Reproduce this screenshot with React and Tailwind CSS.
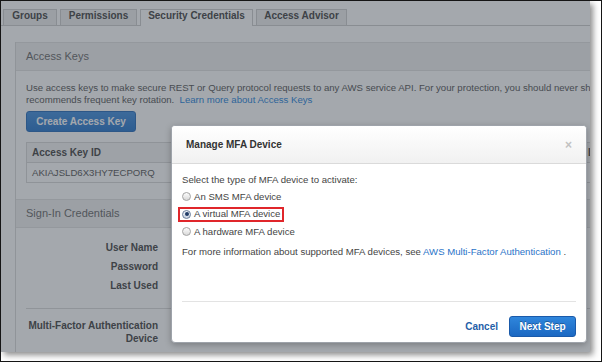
const tabs = [
  { label: 'Groups', w: 'w-[54px]' },
  { label: 'Permissions', w: 'w-[77px]' },
  { label: 'Security Credentials', w: 'w-[113px]', active: true },
  { label: 'Access Advisor', w: 'w-[91px]' },
]

function Radio({ checked }) {
  return (
    <span
      className={`w-[9px] h-[9px] rounded-full border flex items-center justify-center shrink-0 bg-gradient-to-b ${
        checked ? 'border-[#6b7f9c] from-[#eef2f8] to-[#c9d3e2]' : 'border-[#a3a3a3] from-[#fdfdfd] to-[#d8d8d8]'
      }`}
    >
      {checked && <span className="w-[4px] h-[4px] rounded-full bg-[#1f3a66]" />}
    </span>
  )
}

function Page() {
  return (
    <div className="w-[800px] bg-white">
      <div className="flex items-end gap-[3px] pl-[2px] pt-[8px] border-b border-[#d2d2d2]">
        {tabs.map(t => (
          <div
            key={t.label}
            className={`${t.w} text-center text-[10px] leading-[11px] font-bold text-[#555] border border-b-0 border-[#d2d2d2] ${
              t.active ? 'h-[17px] -mb-px bg-white' : 'h-[16px] bg-[#f1f1f1]'
            }`}
          >
            {t.label}
          </div>
        ))}
      </div>

      <div className="ml-[14px] mt-[16px] border-l border-[#dedede]">
        <div className="h-[29px] flex items-center pl-[10px] bg-[#f2f2f2] border-y border-[#e4e4e4] text-[11px] text-[#777]">
          Access Keys
        </div>
        <div className="pl-[10px] pt-[11px] text-[9.6px] leading-[12px] text-[#666]">
          <p className="whitespace-nowrap">
            Use access keys to make secure REST or Query protocol requests to any AWS service API. For your protection, you should never share your secret keys with anyone. In addition, industry best practice
          </p>
          <p className="whitespace-nowrap">
            recommends frequent key rotation.&nbsp; <span className="text-[#3a8fe0]">Learn more about Access Keys</span>
          </p>
          <button className="mt-[5px] h-[21px] w-[110px] rounded-[3px] border border-[#3a78c0] bg-gradient-to-b from-[#5398e0] to-[#3a82d0] text-[10px] font-bold text-white">
            Create Access Key
          </button>
          <div className="mt-[10px] border border-[#dcdcdc] text-[9.6px]">
            <div className="h-[20px] flex items-center bg-[#f6f6f6] border-b border-[#dcdcdc] font-bold text-[10px] text-[#555]">
              <span className="w-[555px] pl-[5px]">Access Key ID</span>
              <span className="pl-[5px] border-l border-[#dcdcdc] h-full flex items-center">Last Used</span>
            </div>
            <div className="h-[19px] flex items-center text-[#666]">
              <span className="w-[555px] pl-[5px]">AKIAJSLD6X3HY7ECPORQ</span>
            </div>
          </div>
        </div>

        <div className="mt-[16px] h-[29px] flex items-center pl-[10px] bg-[#f2f2f2] border-y border-[#e4e4e4] text-[11px] text-[#777]">
          Sign-In Credentials
        </div>
        <div className="ml-[10px] text-[10px] font-bold text-[#555]">
          <div className="pt-[9.5px] pb-[13px] border-b border-[#dedede]">
            {['User Name', 'Password', 'Last Used'].map(l => (
              <div key={l} className="h-[19px] w-[132px] flex items-center justify-end">{l}</div>
            ))}
          </div>
          <div className="pt-[10px] pb-[10px] border-b border-[#dedede] leading-[13px]">
            <div className="w-[132px] text-right">Multi-Factor Authentication<br />Device</div>
          </div>
        </div>
      </div>
    </div>
  )
}

function Modal() {
  return (
    <div className="absolute left-[170px] top-[124px] w-[416px] h-[218px] flex flex-col bg-white rounded-[4px] border border-[#9ea3aa] shadow-[0_2px_6px_rgba(0,0,0,0.25)] overflow-hidden">
      <div className="h-[38px] shrink-0 flex items-center justify-between pl-[14px] pr-[14px] bg-gradient-to-b from-white to-[#f1f1f1] border-b border-[#dadada]">
        <span className="text-[10px] font-bold text-[#333]">Manage MFA Device</span>
        <span className="text-[12px] font-bold text-[#c2c2c2] leading-none">×</span>
      </div>
      <div className="flex-1 px-[10px] pt-[10px] text-[9.6px] leading-[12px] text-[#444]">
        <p>Select the type of MFA device to activate:</p>
        <div className="mt-[2px]">
          <div className="h-[17.5px] flex items-center gap-[3px]">
            <Radio />
            <span>An SMS MFA device</span>
          </div>
          <div className="h-[17.5px] flex items-center">
            <span className="h-[15px] -ml-[4px] px-[2px] border-2 border-[#e0262b] inline-flex items-center gap-[3px]">
              <Radio checked />
              <span>A virtual MFA device</span>
            </span>
          </div>
          <div className="h-[17.5px] flex items-center gap-[3px]">
            <Radio />
            <span>A hardware MFA device</span>
          </div>
        </div>
        <p className="mt-[5px]">
          For more information about supported MFA devices, see <span className="text-[#2a73c8]">AWS Multi-Factor Authentication</span> .
        </p>
      </div>
      <div className="mx-[10px] border-t border-[#e3e3e3]" />
      <div className="flex items-center justify-end gap-[11px] pr-[10px] pt-[14px] pb-[5px]">
        <span className="text-[10px] font-bold text-[#1f60a8]">Cancel</span>
        <button className="w-[67px] h-[21px] rounded-[3px] border border-[#1a5aaa] bg-gradient-to-b from-[#2f86dc] to-[#1b68c2] text-[10px] font-bold text-white [text-shadow:0_-1px_0_rgba(0,0,0,0.3)]">
          Next Step
        </button>
      </div>
    </div>
  )
}

export default function App() {
  return (
    <div className="w-[602px] h-[362px] border border-[#151515] bg-white overflow-hidden font-['Liberation_Sans',Arial,sans-serif]">
      <div className="relative w-[589px] h-[351px] bg-white overflow-hidden shadow-[3px_3px_6px_rgba(0,0,0,0.45)]">
        <Page />
        <div className="absolute inset-0 bg-[rgba(28,38,50,0.4)]" />
        <Modal />
      </div>
    </div>
  )
}
